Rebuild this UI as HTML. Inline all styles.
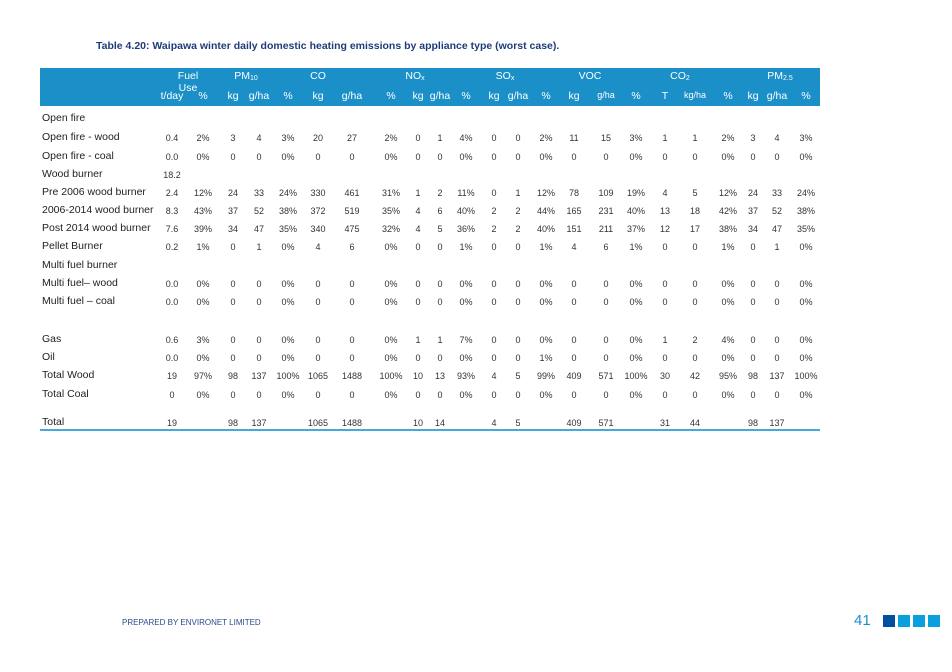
<!DOCTYPE html>
<html><head><meta charset="utf-8"><style>
body{margin:0;width:952px;height:672px;background:#fff;font-family:"Liberation Sans",sans-serif;position:relative;overflow:hidden}
.t{position:absolute;left:96px;top:40px;font-size:10.5px;font-weight:bold;color:#1f3c7a}
.hb{position:absolute;left:40px;top:68px;width:780px;height:38px;background:#1b8fc8}
.r{position:absolute;left:0;width:952px;height:16px;font-size:9px;color:#333}
.r span{position:absolute;width:40px;text-align:center;top:3px}
.r b{position:absolute;left:42px;font-weight:normal;font-size:10.5px;color:#222;top:1px}
.h{color:#fff;font-size:10.5px}
.h span{top:1px}
.c1{left:152px}.c2{left:183px}.c3{left:213px}.c4{left:239px}.c5{left:268px}.c6{left:298px}.c7{left:332px}.c8{left:371px}.c9{left:398px}.c10{left:420px}.c11{left:446px}.c12{left:474px}.c13{left:498px}.c14{left:526px}.c15{left:554px}.c16{left:586px}.c17{left:616px}.c18{left:645px}.c19{left:675px}.c20{left:708px}.c21{left:733px}.c22{left:757px}.c23{left:786px}
sub{font-size:7px;vertical-align:-1px}
.line{position:absolute;left:40px;top:429px;width:780px;height:2px;background:#4aa8d8}
.f{position:absolute;left:122px;top:618px;font-size:8px;color:#2b4a8a}
.pn{position:absolute;left:854px;top:612px;font-size:15px;color:#1a8fd0}
.sq{position:absolute;top:615px;width:12px;height:12px;background:#0aa0e0}
</style></head><body>
<div class="t">Table 4.20: Waipawa winter daily domestic heating emissions by appliance type (worst case).</div>
<div class="hb"></div>
<div class="r h" style="top:69px"><span class="c1" style="left:168px;width:40px">Fuel Use</span><span class="c3" style="left:226px">PM<sub>10</sub></span><span class="c6">CO</span><span class="c10" style="left:395px">NO<sub>x</sub></span><span class="c13" style="left:485px">SO<sub>x</sub></span><span class="c16" style="left:570px">VOC</span><span class="c19" style="left:660px">CO<sub>2</sub></span><span class="c22" style="left:760px">PM<sub>2.5</sub></span></div>
<div class="r h" style="top:89px"><span class="c1">t/day</span><span class="c2">%</span><span class="c3">kg</span><span class="c4">g/ha</span><span class="c5">%</span><span class="c6">kg</span><span class="c7">g/ha</span><span class="c8">%</span><span class="c9">kg</span><span class="c10">g/ha</span><span class="c11">%</span><span class="c12">kg</span><span class="c13">g/ha</span><span class="c14">%</span><span class="c15">kg</span><span class="c16" style="font-size:9px">g/ha</span><span class="c17">%</span><span class="c18">T</span><span class="c19" style="font-size:9px">kg/ha</span><span class="c20">%</span><span class="c21">kg</span><span class="c22">g/ha</span><span class="c23">%</span></div>
<div class="r" style="top:111px"><b>Open fire</b></div>
<div class="r" style="top:130px"><b>Open fire - wood</b><span class="c1">0.4</span><span class="c2">2%</span><span class="c3">3</span><span class="c4">4</span><span class="c5">3%</span><span class="c6">20</span><span class="c7">27</span><span class="c8">2%</span><span class="c9">0</span><span class="c10">1</span><span class="c11">4%</span><span class="c12">0</span><span class="c13">0</span><span class="c14">2%</span><span class="c15">11</span><span class="c16">15</span><span class="c17">3%</span><span class="c18">1</span><span class="c19">1</span><span class="c20">2%</span><span class="c21">3</span><span class="c22">4</span><span class="c23">3%</span></div>
<div class="r" style="top:149px"><b>Open fire - coal</b><span class="c1">0.0</span><span class="c2">0%</span><span class="c3">0</span><span class="c4">0</span><span class="c5">0%</span><span class="c6">0</span><span class="c7">0</span><span class="c8">0%</span><span class="c9">0</span><span class="c10">0</span><span class="c11">0%</span><span class="c12">0</span><span class="c13">0</span><span class="c14">0%</span><span class="c15">0</span><span class="c16">0</span><span class="c17">0%</span><span class="c18">0</span><span class="c19">0</span><span class="c20">0%</span><span class="c21">0</span><span class="c22">0</span><span class="c23">0%</span></div>
<div class="r" style="top:167px"><b>Wood burner</b><span class="c1">18.2</span></div>
<div class="r" style="top:185px"><b>Pre 2006 wood burner</b><span class="c1">2.4</span><span class="c2">12%</span><span class="c3">24</span><span class="c4">33</span><span class="c5">24%</span><span class="c6">330</span><span class="c7">461</span><span class="c8">31%</span><span class="c9">1</span><span class="c10">2</span><span class="c11">11%</span><span class="c12">0</span><span class="c13">1</span><span class="c14">12%</span><span class="c15">78</span><span class="c16">109</span><span class="c17">19%</span><span class="c18">4</span><span class="c19">5</span><span class="c20">12%</span><span class="c21">24</span><span class="c22">33</span><span class="c23">24%</span></div>
<div class="r" style="top:203px"><b>2006-2014 wood burner</b><span class="c1">8.3</span><span class="c2">43%</span><span class="c3">37</span><span class="c4">52</span><span class="c5">38%</span><span class="c6">372</span><span class="c7">519</span><span class="c8">35%</span><span class="c9">4</span><span class="c10">6</span><span class="c11">40%</span><span class="c12">2</span><span class="c13">2</span><span class="c14">44%</span><span class="c15">165</span><span class="c16">231</span><span class="c17">40%</span><span class="c18">13</span><span class="c19">18</span><span class="c20">42%</span><span class="c21">37</span><span class="c22">52</span><span class="c23">38%</span></div>
<div class="r" style="top:221px"><b>Post 2014 wood burner</b><span class="c1">7.6</span><span class="c2">39%</span><span class="c3">34</span><span class="c4">47</span><span class="c5">35%</span><span class="c6">340</span><span class="c7">475</span><span class="c8">32%</span><span class="c9">4</span><span class="c10">5</span><span class="c11">36%</span><span class="c12">2</span><span class="c13">2</span><span class="c14">40%</span><span class="c15">151</span><span class="c16">211</span><span class="c17">37%</span><span class="c18">12</span><span class="c19">17</span><span class="c20">38%</span><span class="c21">34</span><span class="c22">47</span><span class="c23">35%</span></div>
<div class="r" style="top:239px"><b>Pellet Burner</b><span class="c1">0.2</span><span class="c2">1%</span><span class="c3">0</span><span class="c4">1</span><span class="c5">0%</span><span class="c6">4</span><span class="c7">6</span><span class="c8">0%</span><span class="c9">0</span><span class="c10">0</span><span class="c11">1%</span><span class="c12">0</span><span class="c13">0</span><span class="c14">1%</span><span class="c15">4</span><span class="c16">6</span><span class="c17">1%</span><span class="c18">0</span><span class="c19">0</span><span class="c20">1%</span><span class="c21">0</span><span class="c22">1</span><span class="c23">0%</span></div>
<div class="r" style="top:258px"><b>Multi fuel burner</b></div>
<div class="r" style="top:276px"><b>Multi fuel– wood</b><span class="c1">0.0</span><span class="c2">0%</span><span class="c3">0</span><span class="c4">0</span><span class="c5">0%</span><span class="c6">0</span><span class="c7">0</span><span class="c8">0%</span><span class="c9">0</span><span class="c10">0</span><span class="c11">0%</span><span class="c12">0</span><span class="c13">0</span><span class="c14">0%</span><span class="c15">0</span><span class="c16">0</span><span class="c17">0%</span><span class="c18">0</span><span class="c19">0</span><span class="c20">0%</span><span class="c21">0</span><span class="c22">0</span><span class="c23">0%</span></div>
<div class="r" style="top:294px"><b>Multi fuel – coal</b><span class="c1">0.0</span><span class="c2">0%</span><span class="c3">0</span><span class="c4">0</span><span class="c5">0%</span><span class="c6">0</span><span class="c7">0</span><span class="c8">0%</span><span class="c9">0</span><span class="c10">0</span><span class="c11">0%</span><span class="c12">0</span><span class="c13">0</span><span class="c14">0%</span><span class="c15">0</span><span class="c16">0</span><span class="c17">0%</span><span class="c18">0</span><span class="c19">0</span><span class="c20">0%</span><span class="c21">0</span><span class="c22">0</span><span class="c23">0%</span></div>
<div class="r" style="top:332px"><b>Gas</b><span class="c1">0.6</span><span class="c2">3%</span><span class="c3">0</span><span class="c4">0</span><span class="c5">0%</span><span class="c6">0</span><span class="c7">0</span><span class="c8">0%</span><span class="c9">1</span><span class="c10">1</span><span class="c11">7%</span><span class="c12">0</span><span class="c13">0</span><span class="c14">0%</span><span class="c15">0</span><span class="c16">0</span><span class="c17">0%</span><span class="c18">1</span><span class="c19">2</span><span class="c20">4%</span><span class="c21">0</span><span class="c22">0</span><span class="c23">0%</span></div>
<div class="r" style="top:350px"><b>Oil</b><span class="c1">0.0</span><span class="c2">0%</span><span class="c3">0</span><span class="c4">0</span><span class="c5">0%</span><span class="c6">0</span><span class="c7">0</span><span class="c8">0%</span><span class="c9">0</span><span class="c10">0</span><span class="c11">0%</span><span class="c12">0</span><span class="c13">0</span><span class="c14">1%</span><span class="c15">0</span><span class="c16">0</span><span class="c17">0%</span><span class="c18">0</span><span class="c19">0</span><span class="c20">0%</span><span class="c21">0</span><span class="c22">0</span><span class="c23">0%</span></div>
<div class="r" style="top:368px"><b>Total Wood</b><span class="c1">19</span><span class="c2">97%</span><span class="c3">98</span><span class="c4">137</span><span class="c5">100%</span><span class="c6">1065</span><span class="c7">1488</span><span class="c8">100%</span><span class="c9">10</span><span class="c10">13</span><span class="c11">93%</span><span class="c12">4</span><span class="c13">5</span><span class="c14">99%</span><span class="c15">409</span><span class="c16">571</span><span class="c17">100%</span><span class="c18">30</span><span class="c19">42</span><span class="c20">95%</span><span class="c21">98</span><span class="c22">137</span><span class="c23">100%</span></div>
<div class="r" style="top:387px"><b>Total Coal</b><span class="c1">0</span><span class="c2">0%</span><span class="c3">0</span><span class="c4">0</span><span class="c5">0%</span><span class="c6">0</span><span class="c7">0</span><span class="c8">0%</span><span class="c9">0</span><span class="c10">0</span><span class="c11">0%</span><span class="c12">0</span><span class="c13">0</span><span class="c14">0%</span><span class="c15">0</span><span class="c16">0</span><span class="c17">0%</span><span class="c18">0</span><span class="c19">0</span><span class="c20">0%</span><span class="c21">0</span><span class="c22">0</span><span class="c23">0%</span></div>
<div class="r" style="top:415px"><b>Total</b><span class="c1">19</span><span class="c3">98</span><span class="c4">137</span><span class="c6">1065</span><span class="c7">1488</span><span class="c9">10</span><span class="c10">14</span><span class="c12">4</span><span class="c13">5</span><span class="c15">409</span><span class="c16">571</span><span class="c18">31</span><span class="c19">44</span><span class="c21">98</span><span class="c22">137</span></div>
<div class="line"></div>
<div class="f">PREPARED BY ENVIRONET LIMITED</div>
<div class="pn">41</div>
<div class="sq" style="left:883px;background:#0050a0"></div>
<div class="sq" style="left:898px"></div>
<div class="sq" style="left:913px"></div>
<div class="sq" style="left:928px"></div>
</body></html>
